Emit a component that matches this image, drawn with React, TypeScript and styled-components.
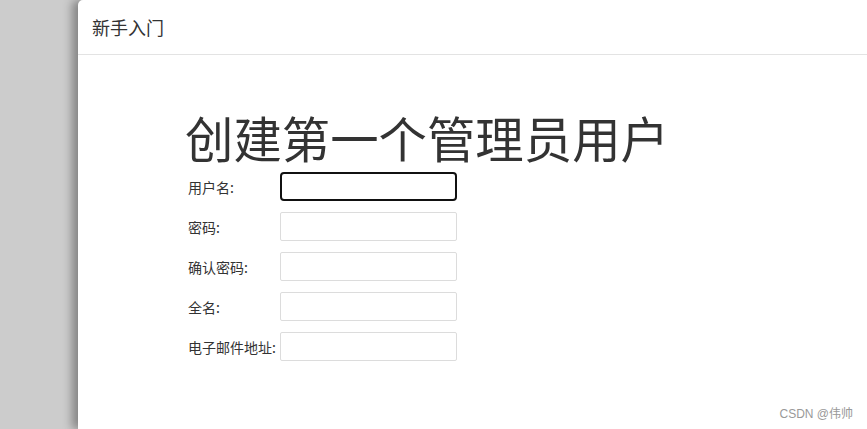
import React from "react";
import styled, { createGlobalStyle } from "styled-components";

const Global = createGlobalStyle`
  html, body { margin: 0; padding: 0; height: 100%; }
  body {
    background: #cccccc;
    font-family: "Liberation Sans", "Noto Sans CJK SC", sans-serif;
    color: #333;
    overflow: hidden;
  }
  #root { height: 100%; }
`;

const Page = styled.div`
  position: relative;
  display: grid;
  grid-template-columns: 78px 1fr;
  height: 429px;
  width: 867px;
  background: #cccccc;
`;

const Backdrop = styled.div`
  background: #cccccc;
`;

const Panel = styled.div`
  background: #fff;
  border-top-left-radius: 5px;
  box-shadow: -6px 0 10px rgba(0, 0, 0, 0.35);
  display: flex;
  flex-direction: column;
  position: relative;
  z-index: 1;
`;

const Header = styled.div`
  height: 54px;
  border-bottom: 1px solid #e3e3e3;
  display: flex;
  align-items: center;
  padding-left: 14px;
  font-size: 18px;
  color: #333;
  font-family: "Noto Sans CJK SC", sans-serif;
`;

const Content = styled.div`
  padding: 53px 0 0 108px;
  display: flex;
  flex-direction: column;
`;

const Heading = styled.h1`
  margin: 0 0 6px -1px;
  font-size: 48.4px;
  line-height: 58px;
  font-weight: 400;
  color: #333;
  font-family: "Noto Sans CJK SC", sans-serif;
`;

const Form = styled.div`
  display: grid;
  grid-template-columns: 94px 177px;
  row-gap: 11px;
  align-items: center;
`;

const Label = styled.label`
  font-size: 14px;
  color: #333;
  padding-left: 2px;
  white-space: nowrap;
  font-family: "Noto Sans CJK SC", sans-serif;
`;

const Input = styled.div<{ $focused?: boolean }>`
  box-sizing: border-box;
  height: 29px;
  width: 177px;
  background: #fff;
  border: ${(p) => (p.$focused ? "2px solid #111" : "1px solid #dcdcdc")};
  border-radius: ${(p) => (p.$focused ? "4px" : "2px")};
`;

const Watermark = styled.div`
  position: absolute;
  right: 14px;
  bottom: 8px;
  font-size: 12px;
  color: #999;
  z-index: 2;
  font-family: "Liberation Sans", "Noto Sans CJK SC", sans-serif;
`;

const fields = ["用户名:", "密码:", "确认密码:", "全名:", "电子邮件地址:"];

export default function App() {
  return (
    <>
      <Global />
      <Page>
        <Backdrop />
        <Panel>
          <Header>新手入门</Header>
          <Content>
            <Heading>创建第一个管理员用户</Heading>
            <Form>
              {fields.map((f, i) => (
                <React.Fragment key={f}>
                  <Label>{f}</Label>
                  <Input $focused={i === 0} />
                </React.Fragment>
              ))}
            </Form>
          </Content>
        </Panel>
        <Watermark>CSDN @伟帅</Watermark>
      </Page>
    </>
  );
}
